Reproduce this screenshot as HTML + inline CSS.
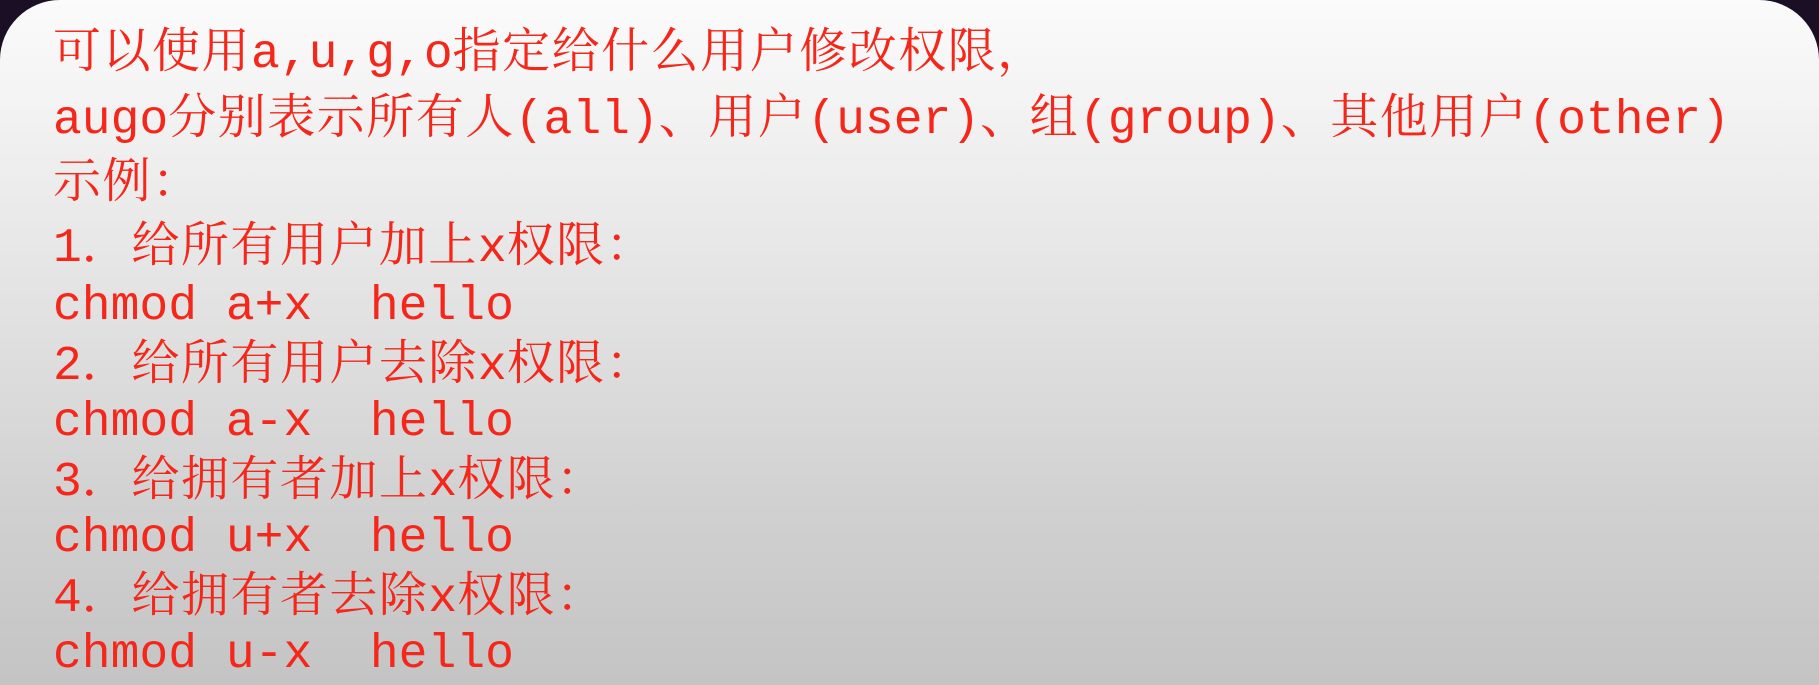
<!DOCTYPE html>
<html><head><meta charset="utf-8"><style>
html,body{margin:0;padding:0;width:1819px;height:685px;overflow:hidden;background:#1a0f24;}
.bg{position:absolute;left:0;top:0;width:1819px;height:685px;border-radius:60px 60px 0 0;
background:linear-gradient(#fbfbfb 0%,#f3f3f3 15%,#e2e2e2 45%,#d0d0d0 75%,#c4c4c4 100%);}
.t{position:absolute;left:53px;top:0;color:#f5261a;font-family:"Liberation Mono","Noto Serif CJK SC",monospace;font-size:48px;}
.t div{position:absolute;left:0;height:60px;line-height:60px;white-space:pre;overflow:visible;}
.c{font-family:"Noto Serif CJK SC","Noto Sans CJK SC",serif;letter-spacing:1.5px;line-height:0;}
.d{font-family:"Liberation Mono",monospace;line-height:0;}
</style></head><body>
<div class="bg"></div>
<div class="t">
<div style="top:25px"><span class="c">可以使用</span><span class="d">a,u,g,o</span><span class="c">指定给什么用户修改权限，</span></div>
<div style="top:91px"><span class="d">augo</span><span class="c">分别表示所有人</span><span class="d">(all)</span><span class="c">、用户</span><span class="d">(user)</span><span class="c">、组</span><span class="d">(group)</span><span class="c">、其他用户</span><span class="d">(other)</span></div>
<div style="top:155px"><span class="c">示例：</span></div>
<div style="top:219px"><span class="d">1</span><span class="c">．给所有用户加上</span><span class="d">x</span><span class="c">权限：</span></div>
<div style="top:277px"><span class="d">chmod a+x  hello</span></div>
<div style="top:337px"><span class="d">2</span><span class="c">．给所有用户去除</span><span class="d">x</span><span class="c">权限：</span></div>
<div style="top:393px"><span class="d">chmod a-x  hello</span></div>
<div style="top:453px"><span class="d">3</span><span class="c">．给拥有者加上</span><span class="d">x</span><span class="c">权限：</span></div>
<div style="top:509px"><span class="d">chmod u+x  hello</span></div>
<div style="top:569px"><span class="d">4</span><span class="c">．给拥有者去除</span><span class="d">x</span><span class="c">权限：</span></div>
<div style="top:625px"><span class="d">chmod u-x  hello</span></div>
</div>
</body></html>
